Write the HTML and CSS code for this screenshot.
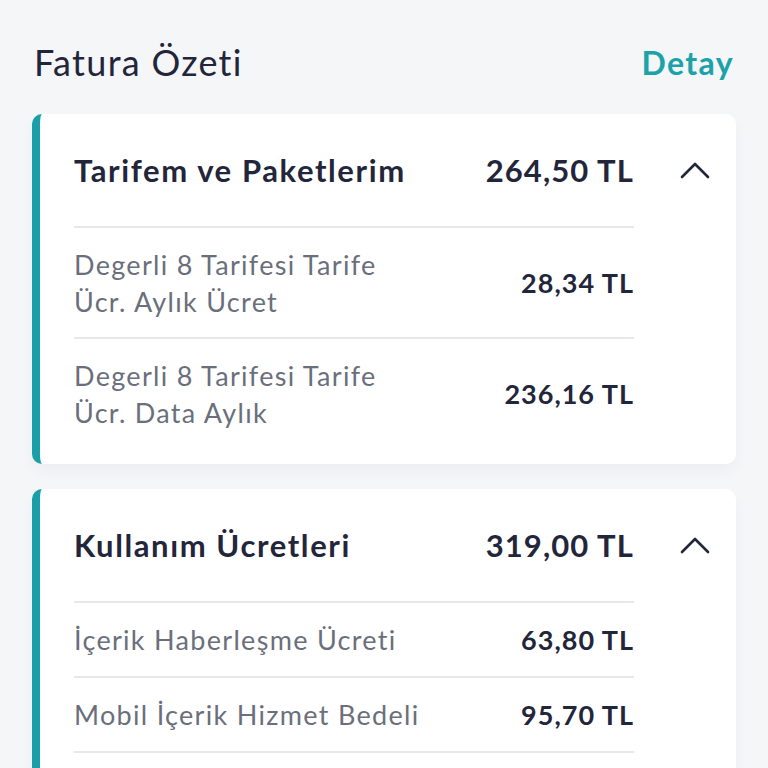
FILE: index.html
```html
<!DOCTYPE html>
<html lang="tr">
<head>
<meta charset="utf-8">
<title>Fatura Özeti</title>
<link rel="stylesheet" href="styles.css">
</head>
<body>
<main class="page">
  <header class="top">
    <h1 class="title">Fatura Özeti</h1>
    <a class="detail-link" href="#">Detay</a>
  </header>

  <section class="card">
    <div class="card-head">
      <span class="head-name">Tarifem ve Paketlerim</span>
      <span class="head-amount">264,50 TL</span>
      <svg class="chevron" viewBox="0 0 30 18" width="30" height="18"><path d="M2 16 L15 3 L28 16" fill="none" stroke="#23263a" stroke-width="2.6" stroke-linecap="round" stroke-linejoin="round"/></svg>
    </div>
    <div class="row tall">
      <span class="row-name">Degerli 8 Tarifesi Tarife<br>Ücr. Aylık Ücret</span>
      <span class="row-amount">28,34 TL</span>
    </div>
    <div class="row tall last">
      <span class="row-name">Degerli 8 Tarifesi Tarife<br>Ücr. Data Aylık</span>
      <span class="row-amount">236,16 TL</span>
    </div>
  </section>

  <section class="card">
    <div class="card-head">
      <span class="head-name">Kullanım Ücretleri</span>
      <span class="head-amount">319,00 TL</span>
      <svg class="chevron" viewBox="0 0 30 18" width="30" height="18"><path d="M2 16 L15 3 L28 16" fill="none" stroke="#23263a" stroke-width="2.6" stroke-linecap="round" stroke-linejoin="round"/></svg>
    </div>
    <div class="row">
      <span class="row-name">İçerik Haberleşme Ücreti</span>
      <span class="row-amount">63,80 TL</span>
    </div>
    <div class="row">
      <span class="row-name">Mobil İçerik Hizmet Bedeli</span>
      <span class="row-amount">95,70 TL</span>
    </div>
    <div class="row end"></div>
  </section>
</main>
</body>
</html>
```

FILE: styles.css
```css
html, body {
  margin: 0;
  padding: 0;
  background: #f5f6f8;
  font-family: Lato, "Noto Sans", sans-serif;
  color: #23263a;
  overflow: hidden;
}

.page {
  padding: 38px 32px 0 32px;
  display: flex;
  flex-direction: column;
  gap: 25px;
}

.top {
  display: flex;
  justify-content: space-between;
  align-items: center;
  height: 48px;
  margin-bottom: 3px;
  padding: 0 2px;
}

.title {
  margin: 0;
  font-size: 36px;
  font-weight: 400;
  letter-spacing: 1.3px;
  color: #23263a;
}

.detail-link {
  font-size: 32px;
  font-weight: 700;
  color: #1ba3a9;
  text-decoration: none;
  letter-spacing: 1.4px;
}

.card {
  background: #ffffff;
  border-left: 8px solid #1a9fa6;
  border-radius: 10px;
  padding: 0 102px 0 34px;
  box-shadow: 0 8px 14px rgba(40, 50, 70, 0.04);
}

.card-head {
  display: flex;
  align-items: center;
  height: 112px;
  margin-right: -102px;
}

.head-name {
  flex: 1;
  font-size: 31px;
  font-weight: 700;
  letter-spacing: 1.6px;
}

.head-amount {
  font-size: 31px;
  font-weight: 700;
  letter-spacing: 1.1px;
}

.chevron {
  margin-left: 46px;
  margin-right: 26px;
  flex: none;
}

.row {
  display: flex;
  align-items: center;
  justify-content: space-between;
  height: 75px;
  border-top: 2px solid #e6e8eb;
  box-sizing: border-box;
}

.row.tall {
  height: 111px;
}

.row.tall.last {
  height: 127px;
  padding-bottom: 16px;
}

.row.end {
  height: 40px;
}

.row-name {
  font-size: 27px;
  line-height: 37px;
  color: #6b6f7c;
  letter-spacing: 1.3px;
}

.row-amount {
  font-size: 27px;
  font-weight: 700;
  color: #23263a;
  letter-spacing: 1px;
}
```
